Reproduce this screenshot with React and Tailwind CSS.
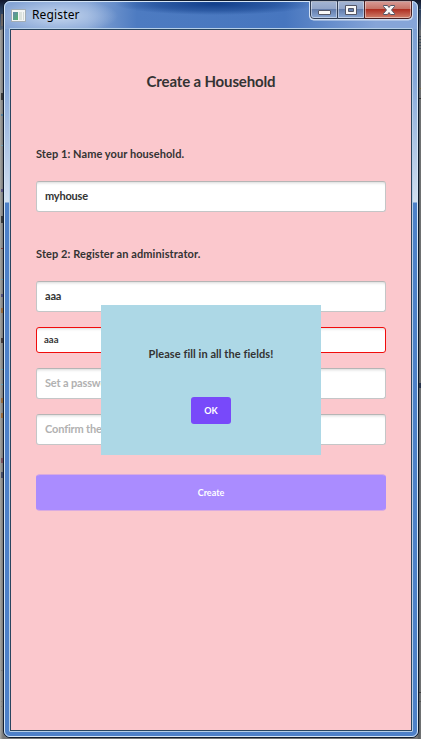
import React from "react";

const leftMarks = [
  { y: 14, h: 12, c: "#766a62" }, { y: 29, h: 1, c: "#777" },
  { y: 93, h: 7, c: "#252525" }, { y: 114, h: 2, c: "#467ba0" },
  { y: 145, h: 1, c: "#69a4be" }, { y: 189, h: 3, c: "#4c4580" },
  { y: 216, h: 7, c: "#25282a" }, { y: 248, h: 1, c: "#843030" },
  { y: 279, h: 1, c: "#559dbb" }, { y: 294, h: 3, c: "#444078" },
  { y: 308, h: 5, c: "#9b632b" }, { y: 338, h: 5, c: "#352929" },
  { y: 369, h: 1, c: "#55a2bb" }, { y: 384, h: 1, c: "#55a2bb" },
  { y: 398, h: 5, c: "#9b632b" }, { y: 413, h: 5, c: "#9b632b" },
  { y: 458, h: 5, c: "#784455" }, { y: 472, h: 6, c: "#343e60" },
  { y: 670, h: 1, c: "#777" }, { y: 701, h: 1, c: "#808080" }, { y: 706, h: 1, c: "#808080" },
];
const rightMarks = [
  { y: 9, h: 1, c: "#52667b" }, { y: 36, h: 1, c: "#354658" },
  { y: 39, h: 1, c: "#354658" }, { y: 42, h: 1, c: "#354658" },
  { y: 45, h: 1, c: "#354658" }, { y: 48, h: 1, c: "#354658" },
  { y: 88, h: 1, c: "#806b35" }, { y: 98, h: 1, c: "#222" },
  { y: 383, h: 5, c: "#172744" }, { y: 692, h: 1, c: "#353535" }, { y: 701, h: 1, c: "#505050" },
];

function Mark({ mark, right }) {
  return (
    <i
      className={`absolute w-[2px] opacity-80 ${right ? "right-0" : "left-px"}`}
      style={{ top: mark.y, height: mark.h, background: mark.c }}
    />
  );
}

function Field({ children, muted, error, className = "" }) {
  const size = error
    ? "h-[26px] border-[#f00c0c] pl-[7px] text-[9.5px]"
    : "h-[31px] border-[#c4c6c7] border-t-[#b5b5b5] pl-2 text-[11px]";
  const tone = muted ? "text-[#b1b1b1] tracking-[-0.15px]" : error ? "text-[#333]" : "text-[#333] tracking-[-0.2px]";
  return (
    <div
      className={`flex w-[350px] items-center whitespace-nowrap rounded-[3px] border bg-white font-bold shadow-[inset_0_3px_3px_-2px_#d8d8d8] ${size} ${tone} ${className}`}
    >
      {children}
    </div>
  );
}

function TitleBar() {
  return (
    <header className="flex h-[26px] items-start justify-between">
      <div className="flex h-[26px] items-center">
        <svg className="ml-[6px]" width="15" height="13" viewBox="0 0 15 13" shapeRendering="crispEdges">
          <rect width="15" height="13" fill="#a3adb5" />
          <rect x="1" y="1" width="13" height="11" fill="#f4f6f5" />
          <rect x="2" y="3" width="5" height="8" fill="url(#app-screen)" />
          <rect x="8" y="3" width="3" height="8" fill="#dce2dd" />
          <rect x="12" y="3" width="1" height="8" fill="#d2d9d6" />
          <defs>
            <linearGradient id="app-screen" x2="1" y2="1">
              <stop stopColor="#6388ad" /><stop offset="1" stopColor="#53b36b" />
            </linearGradient>
          </defs>
        </svg>
        <span className="ml-[6px] font-['Noto_Sans',sans-serif] text-[12px] leading-4 tracking-[0.15px] text-black">
          Register
        </span>
      </div>
      <svg className="-mt-[2px] mr-[4px]" width="104" height="21" viewBox="0 0 104 21">
        <defs>
          <linearGradient id="control-blue" x2="0" y2="1">
            <stop stopColor="#a4b5d3" /><stop offset=".43" stopColor="#92a5c9" />
            <stop offset=".47" stopColor="#637cab" /><stop offset="1" stopColor="#8caad7" />
          </linearGradient>
          <linearGradient id="control-red" x2="0" y2="1">
            <stop stopColor="#d99c97" /><stop offset=".43" stopColor="#c77569" />
            <stop offset=".47" stopColor="#ae2d20" /><stop offset="1" stopColor="#d18470" />
          </linearGradient>
        </defs>
        <path d="M.5 1v15q0 4 4 4h95q4 0 4-4V1" fill="#c6d6ef" stroke="#d2e0f3" />
        <path d="M1.500 1v14q0 3.500 3.500 3.500h23.500V1z" fill="url(#control-blue)" stroke="#303d55" />
        <path d="M28.500 1v17.500h27V1z" fill="url(#control-blue)" stroke="#303d55" />
        <path d="M55.500 1v17.500H99q3.500 0 3.500-3.500V1z" fill="url(#control-red)" stroke="#492023" />
        <path d="M2.500 1.500v14q0 2 2 2h23v-16zM29.500 1.500v16h25v-16zM56.500 1.500v16H99q2.500 0 2.500-2v-14z" fill="none" stroke="#ffffff70" />
        <rect x="9.5" y="10.500" width="12" height="4" rx=".5" fill="#f8f8f8" stroke="#535666" />
        <path fillRule="evenodd" d="M36.500 5.500h11v9h-11zM39.500 8.500v3h5v-3z" fill="#f8f8f8" stroke="#535666" />
        <path d="M74.500 5.500h4l1.500 2 1.500-2h4v1l-3 3.500 3 3.500v1h-4l-1.500-2-1.500 2h-4v-1l3-3.500-3-3.500z" fill="#f8f8f8" stroke="#535666" />
      </svg>
    </header>
  );
}

export default function App() {
  return (
    <div className="relative h-[739px] w-[421px] overflow-hidden bg-[linear-gradient(90deg,#a8a8a4_0,#777_3px,#777_417px,#555d62_419px,#777_421px)] pl-[3px] font-['Lato',sans-serif] text-[#333]">
      <i className="absolute left-0 top-0 h-[30px] w-full bg-[linear-gradient(#11162b,#263c5b_9px,#5c6674)]" />
      {leftMarks.map((m) => <Mark key={m.y} mark={m} />)}
      {rightMarks.map((m) => <Mark key={m.y} mark={m} right />)}
      <main className="relative h-[738px] w-[416px] rounded-[7px] border border-[#101c2e] bg-[linear-gradient(#6184be_0,#7c9fd3_28px,#86a8da_80px,#d2dfef_202px,#4d80c8_203px,#4d80c8_100%)] bg-origin-border">
        <div className="h-full rounded-[6px] border border-[#d5e5f6] bg-[radial-gradient(ellipse_60px_18px_at_53px_14px,#c9d9efee,#b5cae988_60%,#00000000),radial-gradient(ellipse_100px_11px_at_210px_2px,#123f8a,#123f8a88_60%,#00000000),linear-gradient(90deg,#86a5d5_0,#86a5d5_20%,#4d7bc1_32%,#4776bf_68%,#86a5d8_90%)] bg-[length:100%_27px] bg-no-repeat">
          <TitleBar />
          <div className="mx-auto h-[704px] w-[404px] rounded-[1px] border border-[#b6cfe8]">
            <section className="relative h-[702px] w-[402px] border border-[#29455f] bg-[#fbc8cd]">
              <div className="flex flex-col items-center">
                <h1 className="mt-[41px] whitespace-nowrap text-[15px] font-bold leading-5 tracking-[-0.15px]">Create a Household</h1>
                <div className="mt-[55px] w-[350px]">
                  <h2 className="text-[11px] font-bold leading-4 tracking-[0.07px]">Step 1: Name your household.</h2>
                  <Field className="mt-[19px]">myhouse</Field>
                  <h2 className="mt-[34px] text-[11px] font-bold leading-4 tracking-[0.09px]">Step 2: Register an administrator.</h2>
                  <Field className="mt-[19px]">aaa</Field>
                  <Field error className="mt-[15px]">aaa</Field>
                  <Field muted className="mt-[15px]">Set a password</Field>
                  <Field muted className="mt-[15px]">Confirm the password</Field>
                  <button className="mt-[29px] flex h-[37px] w-[350px] items-center justify-center rounded-[4px] border border-[#d9abe1] border-x-[#aa8cff] bg-[#aa8cff] text-[9px] font-bold text-white">Create</button>
                </div>
              </div>
              <div className="absolute left-[90px] top-[275px] flex h-[150px] w-[220px] flex-col items-center bg-[#add8e6]">
                <p className="mt-[41px] whitespace-nowrap text-[11px] font-bold leading-4 tracking-[0.06px]">Please fill in all the fields!</p>
                <button className="mt-[35px] flex h-[27px] w-[40px] items-center justify-center rounded-[3px] bg-[#7849fa] text-[9px] font-bold text-white">OK</button>
              </div>
            </section>
          </div>
        </div>
      </main>
    </div>
  );
}
